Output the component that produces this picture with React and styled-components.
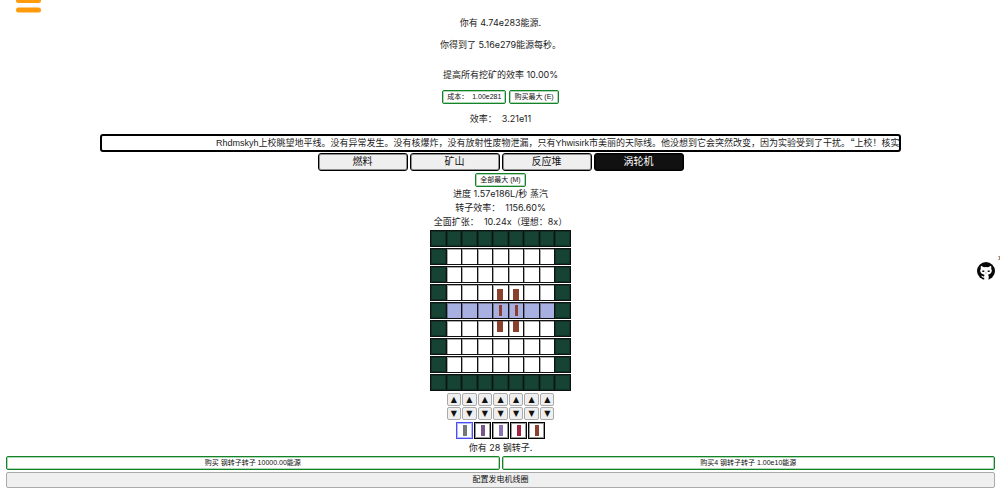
import React, { useState } from 'react';
import styled, { createGlobalStyle, css } from 'styled-components';

const GlobalStyle = createGlobalStyle`
  * { box-sizing: border-box; }
  body {
    margin: 0;
    background: #fff;
    color: #222;
    font: 9px/14px Inter, "Noto Sans CJK SC", sans-serif;
    overflow-x: hidden;
  }
  button {
    margin: 0;
    padding: 0;
    font-family: "Liberation Sans", "Noto Sans CJK SC", sans-serif;
    color: #111;
    cursor: pointer;
  }
`;

const Page = styled.main`
  display: flex;
  flex-direction: column;
  align-items: center;
  padding: 16px 5px 12px 6px;
`;

const MenuButton = styled.button`
  position: absolute;
  top: 0;
  left: 16px;
  width: 25px;
  height: 13px;
  border: 0;
  background: none;
  svg { display: block; }
`;

const Summary = styled.section`
  display: flex;
  flex-direction: column;
  align-items: center;
  gap: 8px;
  margin-bottom: 8px;
`;

const Line = styled.p`
  margin: 0;
  white-space: pre;
  padding-top: ${(p) => (p.$spaced ? '8px' : '0')};
`;

const ButtonRow = styled.div`
  display: flex;
  gap: 3px;
`;

const BuyButton = styled.button`
  height: 14px;
  padding: 0 4px;
  border: 1px solid #128427;
  border-radius: 2px;
  background: #fff;
  font-size: 7px;
  line-height: 12px;
  white-space: pre;
  flex: ${(p) => (p.$wide ? '1' : 'none')};
  box-shadow: inset 0 0 0 1px #12842755;
`;

const Ticker = styled.div`
  width: 81%;
  height: 18px;
  border: 2px solid #000;
  border-radius: 3px;
  padding-left: 114px;
  overflow: hidden;
  white-space: nowrap;
  font-family: "Liberation Sans", "Noto Sans CJK SC", sans-serif;
`;

const WideQuote = styled.span`
  font-family: "Noto Sans CJK SC", sans-serif;
  line-height: 1;
`;

const Tabs = styled.nav`
  display: flex;
  gap: 2px;
  margin: 1px 0 2px;
`;

const Tab = styled.button`
  width: 90px;
  height: 18px;
  border: 1px solid #000;
  border-radius: 3px;
  box-shadow: inset 0 0 0 1px #0006;
  background: ${(p) => (p.$active ? '#111' : '#efefef')};
  color: ${(p) => (p.$active ? '#fff' : '#111')};
  font-size: 10px;
  line-height: 16px;
`;

const Status = styled.section`
  display: flex;
  flex-direction: column;
  align-items: center;
  margin-bottom: 1px;
`;

const Board = styled.div`
  display: flex;
  flex-direction: column;
  gap: 1px;
  width: 141px;
  margin-bottom: 2px;
`;

const BoardRow = styled.div`
  display: grid;
  grid-template-columns: repeat(9, 1fr);
  gap: 1px;
  height: 17px;
  padding: 1px;
  background: #111;
`;

const cellColours = { wall: '#174334', shaft: '#a8b0e2', open: '#fff' };

const Cell = styled.div`
  display: flex;
  justify-content: center;
  align-items: ${(p) => p.$align || 'center'};
  background: ${(p) => cellColours[p.$kind]};
  ${(p) => p.$kind === 'wall'
    ? css`box-shadow: inset 0 0 0 1px #0f3226;`
    : css`box-shadow: inset 1px 1px 0 #0005;`}
`;

const Rotor = styled.span`
  display: block;
  width: ${(p) => p.$width}px;
  height: 11px;
  background: ${(p) => p.$colour};
`;

const Arrows = styled.div`
  display: grid;
  grid-template-columns: repeat(7, 1fr);
  gap: 1px;
  width: 108px;
  margin-bottom: 2px;
`;

const ArrowButton = styled.button`
  height: 13px;
  border: 1px solid #aaa;
  border-radius: 2px;
  background: #efefef;
  font-family: "DejaVu Sans", sans-serif;
  font-size: 8px;
  line-height: 11px;
`;

const Selector = styled.div`
  display: flex;
  gap: 1px;
  margin-bottom: 2px;
`;

const SelectButton = styled.button`
  display: flex;
  align-items: center;
  justify-content: center;
  width: 17px;
  height: 17px;
  border: 1px solid ${(p) => (p.$active ? '#4650f5' : '#000')};
  box-shadow: inset 0 0 0 1px ${(p) => (p.$active ? '#4650f566' : '#0006')};
  background: #fff;
`;

const Purchases = styled.div`
  display: flex;
  gap: 2px;
  width: 100%;
  margin: 1px 0 2px;
`;

const CoilButton = styled.button`
  width: 100%;
  height: 16px;
  border: 1px solid #aaa;
  border-radius: 2px;
  background: #efefef;
  font-size: 8px;
  line-height: 14px;
`;

const SideLinks = styled.aside`
  position: absolute;
  top: 251px;
  right: 0;
  width: 23px;
  height: 30px;
  overflow: hidden;
`;

const CloseButton = styled.button`
  position: absolute;
  top: 0;
  right: -3px;
  border: 0;
  background: none;
  font-size: 9px;
  line-height: 14px;
`;

const GithubLink = styled.a`
  position: absolute;
  top: 11px;
  left: 0;
  svg { display: block; }
`;

const newsStart =
  'Rhdmskyh上校眺望地平线。没有异常发生。没有核爆炸，没有放射性废物泄漏，只有Yhwisirk市美丽的天际线。他没想到它会突然改变，因为实验受到了干扰。';
const newsEnd = '上校！核实';

const tabNames = ['燃料', '矿山', '反应堆', '涡轮机'];
const rotors = [
  ['钢', '#707878'],
  ['钛', '#75558a'],
  ['钨', '#8b73b3'],
  ['铱', '#a3233f'],
  ['铜', '#8b402d'],
];
const indices = (n) => Array.from({ length: n }, (_, i) => i);

const rotorRows = {
  3: { width: 6, align: 'flex-end' },
  4: { width: 3, align: 'center' },
  5: { width: 6, align: 'flex-start' },
};

function TurbineBoard() {
  return (
    <Board>
      {indices(9).map((row) => (
        <BoardRow key={row}>
          {indices(9).map((col) => {
            const wall = row === 0 || row === 8 || col === 0 || col === 8;
            const rotor = (col === 4 || col === 5) && rotorRows[row];
            return (
              <Cell
                key={col}
                $kind={wall ? 'wall' : row === 4 ? 'shaft' : 'open'}
                $align={rotor ? rotor.align : 'center'}
              >
                {rotor && <Rotor $width={rotor.width} $colour="#8b402d" />}
              </Cell>
            );
          })}
        </BoardRow>
      ))}
    </Board>
  );
}

export default function App() {
  const [tab, setTab] = useState(3);
  const [selected, setSelected] = useState(0);
  return (
    <>
      <GlobalStyle />
      <MenuButton aria-label="菜单">
        <svg width="25" height="13" viewBox="0 0 25 13">
          <rect y="-2" width="25" height="5" rx="2.5" fill="#ff9b0b" />
          <rect y="7.5" width="25" height="5" rx="2.5" fill="#ff9b0b" />
        </svg>
      </MenuButton>
      <Page>
        <Summary>
          <Line>你有 4.74e283能源.</Line>
          <Line>你得到了 5.16e279能源每秒。</Line>
          <Line $spaced>提高所有挖矿的效率 10.00%</Line>
          <ButtonRow>
            <BuyButton>成本：  1.00e281</BuyButton>
            <BuyButton>购买最大 (E)</BuyButton>
          </ButtonRow>
          <Line>效率：  3.21e11</Line>
        </Summary>
        <Ticker>{newsStart}<WideQuote>“</WideQuote>{newsEnd}</Ticker>
        <Tabs>
          {tabNames.map((name, i) => (
            <Tab key={name} $active={i === tab} onClick={() => setTab(i)}>{name}</Tab>
          ))}
        </Tabs>
        <Status>
          <BuyButton>全部最大 (M)</BuyButton>
          <Line>进度 1.57e186L/秒 蒸汽</Line>
          <Line>转子效率：  1156.60%</Line>
          <Line>全面扩张：  10.24x（理想：8x）</Line>
        </Status>
        <TurbineBoard />
        <Arrows>
          {indices(14).map((i) => (
            <ArrowButton key={i}>{i < 7 ? '▲' : '▼'}</ArrowButton>
          ))}
        </Arrows>
        <Selector>
          {rotors.map(([name, colour], i) => (
            <SelectButton key={name} aria-label={name} $active={i === selected} onClick={() => setSelected(i)}>
              <Rotor $width={4} $colour={colour} />
            </SelectButton>
          ))}
        </Selector>
        <Line>你有 28 钢转子.</Line>
        <Purchases>
          <BuyButton $wide>购买 钢转子转子 10000.00能源</BuyButton>
          <BuyButton $wide>购买4 钢转子转子 1.00e10能源</BuyButton>
        </Purchases>
        <CoilButton>配置发电机线圈</CoilButton>
      </Page>
      <SideLinks>
        <CloseButton aria-label="关闭">×</CloseButton>
        <GithubLink href="#github" aria-label="GitHub">
          <svg width="18" height="18" viewBox="0 0 18 18">
            <circle cx="9" cy="9" r="9" fill="#080808" />
            <path d="M4 3.8 7 5.2Q9 4.8 11 5.2L14 3.8Q14.6 5.4 14.2 6.8 15.2 8 14.6 10 13.8 12.3 11 12.8L11.8 14.5 11.4 18H7.2V15.8Q5 16 4.2 13.8L5.2 13.8Q6 14.8 7.2 14.3L7.4 12.8Q4.2 12.3 3.4 10 2.8 8 3.8 6.8 3.4 5.4 4 3.8Z" fill="#fff" />
            <path d="M5.3 9.2h2M10.7 9.2h2" stroke="#111" strokeWidth="1.4" />
            <path d="M8.3 11h1.4" stroke="#777" strokeWidth=".7" />
          </svg>
        </GithubLink>
      </SideLinks>
    </>
  );
}
